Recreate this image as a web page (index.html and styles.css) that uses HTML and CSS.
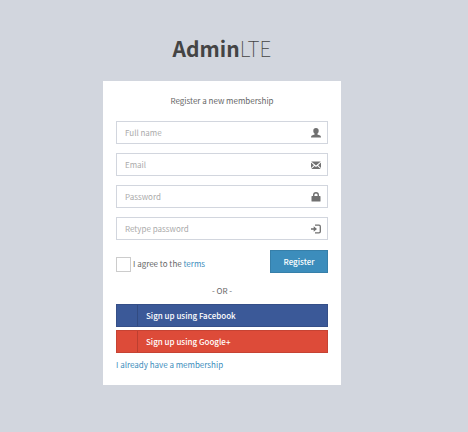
FILE: index.html
```html
<!DOCTYPE html>
<html lang="en">
<head>
<meta charset="utf-8">
<meta name="viewport" content="width=device-width, initial-scale=1">
<title>AdminLTE | Registration</title>
<link rel="stylesheet" href="styles.css">
</head>
<body>
<main class="register">
  <h1 class="logo"><b>Admin</b>LTE</h1>
  <div class="card">
    <p class="intro">Register a new membership</p>
    <form class="form">
      <div class="field">
        <input class="control" type="text" placeholder="Full name" aria-label="Full name">
        <svg class="icon" viewBox="0 0 10 10" aria-hidden="true"><path d="M5 0C3.200 0 2.300 1 2.300 2.700c0 1.300.5 2.300 1.300 2.900v1L.8 7.500Q0 7.900 0 9.500h10Q10 7.900 9.200 7.500L6.400 6.600v-1c.8-.6 1.300-1.600 1.300-2.900C7.700 1 6.800 0 5 0z"/></svg>
      </div>
      <div class="field">
        <input class="control" type="email" placeholder="Email" aria-label="Email">
        <svg class="icon" viewBox="0 0 10 10" aria-hidden="true"><path d="M.2 1.500h9.600L5 5.600zM0 2.600l2.900 2.600L0 7.900zM10 2.600L7.100 5.200 10 7.900zM3.600 5.900L5 7.100l1.400-1.200L9.700 9H.3z"/></svg>
      </div>
      <div class="field">
        <input class="control" type="password" placeholder="Password" aria-label="Password">
        <svg class="icon" viewBox="0 0 10 10" aria-hidden="true"><path fill-rule="evenodd" d="M2 4V3a3 3 0 0 1 6 0v1h1q.5 0 .5.500v4.500q0 .5-.5.5H1q-.5 0-.5-.5V4.500Q.5 4 1 4zM3.400 4h3.200V3a1.600 1.600 0 0 0-3.200 0z"/></svg>
      </div>
      <div class="field">
        <input class="control" type="password" placeholder="Retype password" aria-label="Retype password">
        <svg class="icon" viewBox="0 0 10 10" aria-hidden="true"><path d="M0 4.200h2.700V2.300L6 5 2.700 7.700V5.800H0z"/><path class="stroke" d="M4 1.200h4q1.300 0 1.300 1.300v5q0 1.300-1.300 1.300H4"/></svg>
      </div>
      <div class="actions">
        <div class="agree">
          <input class="check" type="checkbox" id="agree">
          <label for="agree">I agree to the <a href="#terms">terms</a></label>
        </div>
        <button class="submit" type="submit">Register</button>
      </div>
    </form>
    <p class="or">- OR -</p>
    <div class="social">
      <a class="provider facebook" href="#facebook">Sign up using Facebook</a>
      <a class="provider google" href="#google">Sign up using Google+</a>
    </div>
    <a class="login" href="#login">I already have a membership</a>
  </div>
</main>
</body>
</html>
```
FILE: styles.css
```css
* {
  box-sizing: border-box;
}

body {
  margin: 0;
  min-height: 100vh;
  padding-right: 24px;
  background: #d2d6de;
  color: #666;
  font: 8px/14px "Source Sans Pro", "Noto Sans CJK SC", "Noto Sans", sans-serif;
}

a {
  color: #3c8dbc;
  text-decoration: none;
}

p {
  margin: 0;
}

.register {
  max-width: 238px;
  margin: 0 auto;
  padding-top: 32px;
}

.logo {
  margin: 0 0 17px;
  color: #444;
  font-size: 21px;
  line-height: 32px;
  font-weight: 100;
  text-align: center;
}

.logo b {
  font-weight: 700;
}

.card {
  padding: 13px;
  background: #fff;
}

.intro {
  margin-bottom: 13px;
  text-align: center;
}

.form {
  display: grid;
  gap: 9px;
}

.field {
  display: grid;
  grid-template-columns: 1fr 24px;
  align-items: center;
}

.control {
  grid-area: 1 / 1 / 2 / 3;
  width: 100%;
  height: 23px;
  padding: 0 24px 0 8px;
  border: 1px solid #d2d6de;
  border-radius: 0;
  background: #fff;
  color: #555;
  font: inherit;
}

.control::placeholder {
  color: #aaa;
  opacity: 1;
}

.icon {
  grid-area: 1 / 2;
  justify-self: center;
  width: 10px;
  height: 10px;
  fill: #707070;
  pointer-events: none;
  z-index: 1;
}

.stroke {
  fill: none;
  stroke: #707070;
  stroke-width: 1.3;
}

.actions {
  display: flex;
  justify-content: space-between;
  padding-top: 1px;
}

.agree {
  display: flex;
  align-items: center;
  gap: 2px;
  padding-top: 5px;
}

.check {
  appearance: none;
  width: 15px;
  height: 15px;
  margin: 0;
  border: 1px solid #ccc;
  background: #fff;
}

.submit {
  width: 58px;
  height: 23px;
  padding: 0;
  border: 1px solid #367fa9;
  background: #3c8dbc;
  color: #fff;
  font: inherit;
  font-weight: 500;
}

.or {
  margin: 11px 0 6px;
  text-align: center;
}

.social {
  display: grid;
  gap: 3px;
  margin-bottom: 5px;
}

.provider {
  display: grid;
  grid-template-columns: 21px 1fr;
  column-gap: 8px;
  height: 23px;
  border: 1px solid rgba(0, 0, 0, 0.1);
  color: #fff;
  font-weight: 500;
  line-height: 21px;
}

.provider::before {
  content: "";
  border-right: 1px solid rgba(0, 0, 0, 0.15);
}

.facebook {
  background: #3b5998;
}

.google {
  background: #dd4b39;
}

.login {
  display: block;
}
```
